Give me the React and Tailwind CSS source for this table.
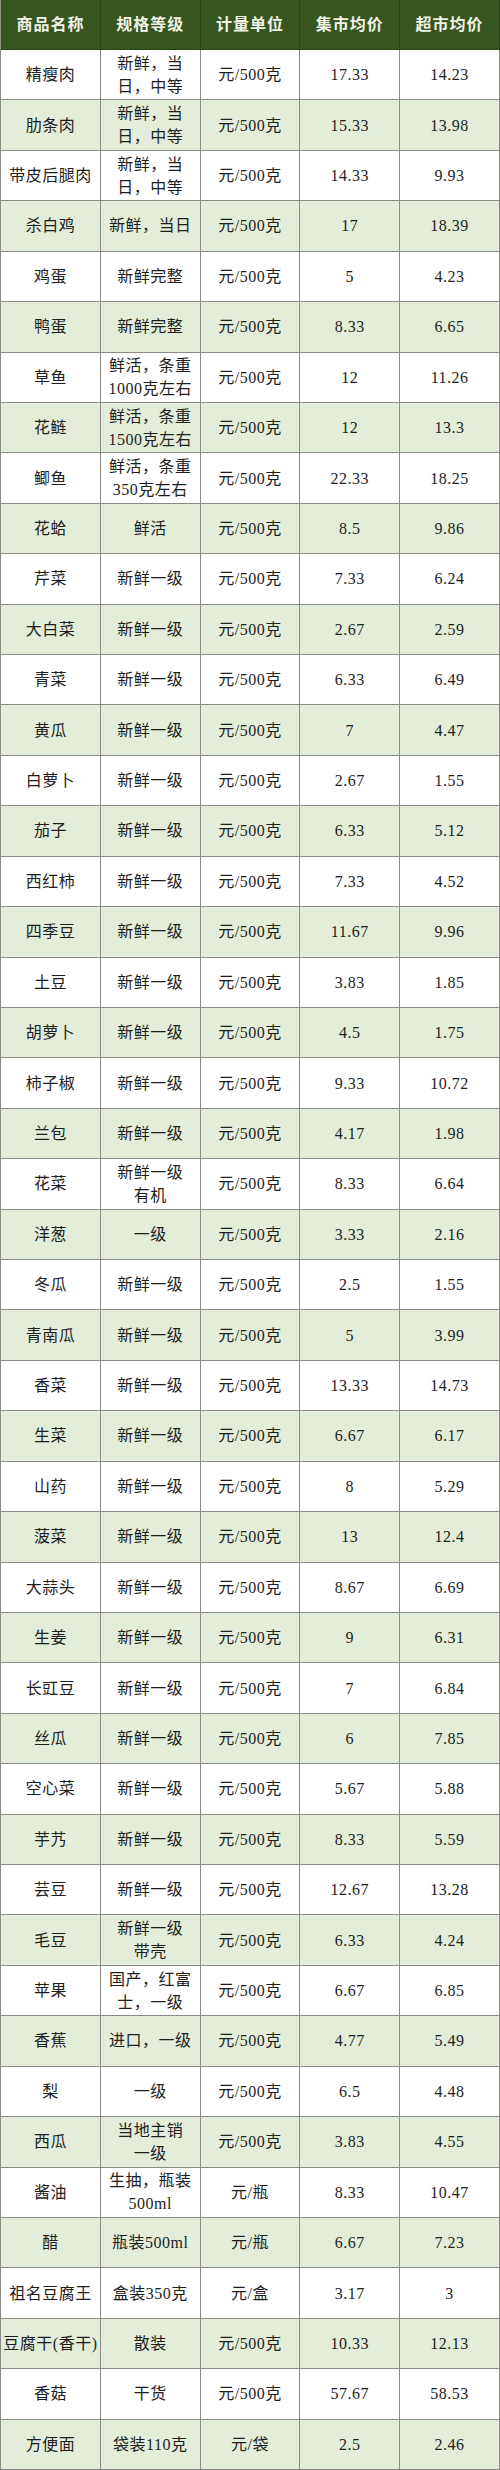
import React from 'react';

const rows = [
  ['精瘦肉', '新鲜，当\n日，中等', '元/500克', '17.33', '14.23'],
  ['肋条肉', '新鲜，当\n日，中等', '元/500克', '15.33', '13.98'],
  ['带皮后腿肉', '新鲜，当\n日，中等', '元/500克', '14.33', '9.93'],
  ['杀白鸡', '新鲜，当日', '元/500克', '17', '18.39'],
  ['鸡蛋', '新鲜完整', '元/500克', '5', '4.23'],
  ['鸭蛋', '新鲜完整', '元/500克', '8.33', '6.65'],
  ['草鱼', '鲜活，条重\n1000克左右', '元/500克', '12', '11.26'],
  ['花鲢', '鲜活，条重\n1500克左右', '元/500克', '12', '13.3'],
  ['鲫鱼', '鲜活，条重\n350克左右', '元/500克', '22.33', '18.25'],
  ['花蛤', '鲜活', '元/500克', '8.5', '9.86'],
  ['芹菜', '新鲜一级', '元/500克', '7.33', '6.24'],
  ['大白菜', '新鲜一级', '元/500克', '2.67', '2.59'],
  ['青菜', '新鲜一级', '元/500克', '6.33', '6.49'],
  ['黄瓜', '新鲜一级', '元/500克', '7', '4.47'],
  ['白萝卜', '新鲜一级', '元/500克', '2.67', '1.55'],
  ['茄子', '新鲜一级', '元/500克', '6.33', '5.12'],
  ['西红柿', '新鲜一级', '元/500克', '7.33', '4.52'],
  ['四季豆', '新鲜一级', '元/500克', '11.67', '9.96'],
  ['土豆', '新鲜一级', '元/500克', '3.83', '1.85'],
  ['胡萝卜', '新鲜一级', '元/500克', '4.5', '1.75'],
  ['柿子椒', '新鲜一级', '元/500克', '9.33', '10.72'],
  ['兰包', '新鲜一级', '元/500克', '4.17', '1.98'],
  ['花菜', '新鲜一级\n有机', '元/500克', '8.33', '6.64'],
  ['洋葱', '一级', '元/500克', '3.33', '2.16'],
  ['冬瓜', '新鲜一级', '元/500克', '2.5', '1.55'],
  ['青南瓜', '新鲜一级', '元/500克', '5', '3.99'],
  ['香菜', '新鲜一级', '元/500克', '13.33', '14.73'],
  ['生菜', '新鲜一级', '元/500克', '6.67', '6.17'],
  ['山药', '新鲜一级', '元/500克', '8', '5.29'],
  ['菠菜', '新鲜一级', '元/500克', '13', '12.4'],
  ['大蒜头', '新鲜一级', '元/500克', '8.67', '6.69'],
  ['生姜', '新鲜一级', '元/500克', '9', '6.31'],
  ['长豇豆', '新鲜一级', '元/500克', '7', '6.84'],
  ['丝瓜', '新鲜一级', '元/500克', '6', '7.85'],
  ['空心菜', '新鲜一级', '元/500克', '5.67', '5.88'],
  ['芋艿', '新鲜一级', '元/500克', '8.33', '5.59'],
  ['芸豆', '新鲜一级', '元/500克', '12.67', '13.28'],
  ['毛豆', '新鲜一级\n带壳', '元/500克', '6.33', '4.24'],
  ['苹果', '国产，红富\n士，一级', '元/500克', '6.67', '6.85'],
  ['香蕉', '进口，一级', '元/500克', '4.77', '5.49'],
  ['梨', '一级', '元/500克', '6.5', '4.48'],
  ['西瓜', '当地主销\n一级', '元/500克', '3.83', '4.55'],
  ['酱油', '生抽，瓶装\n500ml', '元/瓶', '8.33', '10.47'],
  ['醋', '瓶装500ml', '元/瓶', '6.67', '7.23'],
  ['祖名豆腐王', '盒装350克', '元/盒', '3.17', '3'],
  ['豆腐干(香干)', '散装', '元/500克', '10.33', '12.13'],
  ['香菇', '干货', '元/500克', '57.67', '58.53'],
  ['方便面', '袋装110克', '元/袋', '2.5', '2.46'],
];

const headers = ['商品名称', '规格等级', '计量单位', '集市均价', '超市均价'];

export default function App() {
  return (
    <div
      className="w-[500px] h-[2470px] grid grid-cols-5 grid-rows-[50px_repeat(48,1fr)] border-l-[1.5px] border-[#8a8a86] text-[16px] leading-[23px] text-[#1e1e1e]"
      style={{ fontFamily: '"Liberation Serif", "Noto Sans CJK SC", serif' }}
    >
      {headers.map((h) => (
        <div
          key={h}
          className="flex items-center justify-center bg-[#37561f] text-[#f2f2e6] font-semibold tracking-[1px] border-r-[1.5px] border-b-[1.5px] border-[#2c4418]"
        >
          {h}
        </div>
      ))}
      {rows.map((row, i) =>
        row.map((cell, j) => (
          <div
            key={i + '-' + j}
            className={
              'flex items-center justify-center text-center whitespace-pre-line tracking-[0.5px] border-r-[1.5px] border-b-[1.5px] border-[#8a8a86] ' +
              (i % 2 === 1 ? 'bg-[#e3edda]' : 'bg-white')
            }
          >
            {cell}
          </div>
        ))
      )}
    </div>
  );
}
